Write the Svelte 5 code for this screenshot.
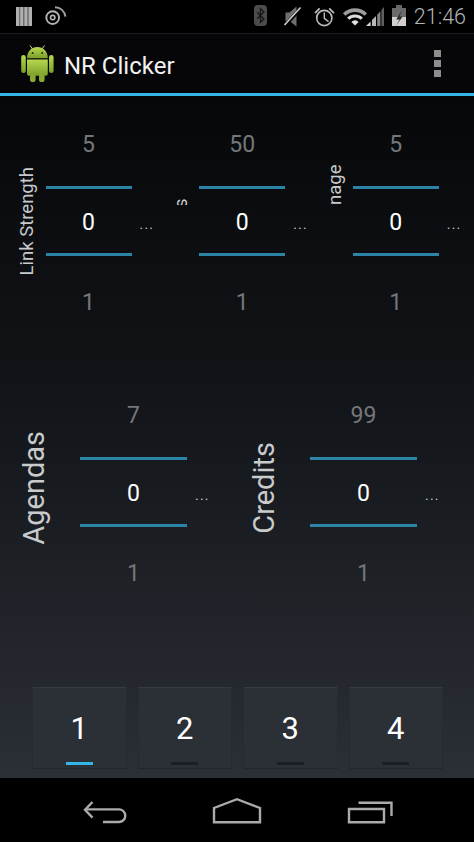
<script>
  const topPickers = [
    { label: 'Link Strength', max: '5', kind: 'full' },
    { label: 's', max: '50', kind: 'clip s' },
    { label: 'nage', max: '5', kind: 'clip' }
  ];
  const lowerPickers = [
    { label: 'Agendas', max: '7' },
    { label: 'Credits', max: '99' }
  ];
  const buttons = ['1', '2', '3', '4'];
</script>

<div class="screen">
  <header class="status">
    <svg class="left-icons" width="52" height="33" viewBox="15 0 52 33" aria-hidden="true">
      <rect x="16" y="7" width="16" height="19" fill="#5c5c5c" />
      <rect x="16" y="7" width="3.2" height="19" fill="#b0b0b0" />
      <rect x="20.2" y="7" width="3" height="19" fill="#b0b0b0" />
      <rect x="24.4" y="7" width="3" height="19" fill="#b0b0b0" />
      <rect x="28.6" y="7" width="3.4" height="19" fill="#b0b0b0" />
      <circle cx="52.7" cy="17.6" r="6.4" fill="none" stroke="#b4b4b4" stroke-width="1.9" />
      <circle cx="52.7" cy="17.6" r="2.2" fill="none" stroke="#b4b4b4" stroke-width="1.6" />
      <path d="M55 7.2A10.5 10.5 0 0 1 65.4 16.6" fill="none" stroke="#a0a0a0" stroke-width="1.9" />
    </svg>
    <div class="status-right">
      <svg width="154" height="33" viewBox="254 0 154 33" aria-hidden="true">
        <rect x="254" y="5" width="13" height="21" rx="4" fill="#4c4c4c" />
        <path d="M257.2 12.2 264 19 260.5 22.3V8.7L264 12 257.2 18.8" fill="none" stroke="#161616" stroke-width="1.3" />
        <path d="M285.5 12.5h4l7-6v20l-7-5.5h-4z" fill="#6f6f6f" />
        <path d="M285 25.5 301 8" stroke="#000" stroke-width="3.4" />
        <path d="M284.5 25 300.5 7.5" stroke="#cfcfcf" stroke-width="1.6" />
        <circle cx="324.3" cy="18" r="7.6" fill="none" stroke="#bdbdbd" stroke-width="1.6" />
        <path d="M324.3 12.5V18.4L328.6 21.6" fill="none" stroke="#bdbdbd" stroke-width="1.4" />
        <path d="M315 13.2 319.6 8.4M329.2 8.4 334 13.2" fill="none" stroke="#bdbdbd" stroke-width="1.7" />
        <path d="M355 25.5 351.4 21.9A5 5 0 0 1 358.6 21.9Z" fill="#e2e2e2" />
        <path d="M348.2 18.7A9.6 9.6 0 0 1 361.8 18.7" fill="none" stroke="#dcdcdc" stroke-width="3" />
        <path d="M344.2 14.6A15.3 15.3 0 0 1 365.8 14.6" fill="none" stroke="#9c9c9c" stroke-width="3.6" />
        <path d="M366 26 370.6 21.4V26Z" fill="#d6d6d6" />
        <path d="M372 26V20L376 16V26Z" fill="#b8b8b8" />
        <path d="M377.2 26V14.8L380.4 11.2V26Z" fill="#848484" />
        <path d="M381.4 26V10L384 7V26Z" fill="#5e5e5e" />
        <rect x="396" y="5" width="6" height="3" fill="#666" />
        <rect x="392" y="8" width="14" height="18" fill="#6a6a6a" />
        <rect x="392" y="17" width="14" height="9" fill="#d0d0d0" />
        <path d="M402 10 396.2 19.5H399.6L396 26 402.6 16.6H399.4Z" fill="#2c2c2c" />
      </svg>
      <span class="time">21:46</span>
    </div>
  </header>

  <div class="actionbar">
    <svg class="droid" width="34" height="39" viewBox="0 0 34 39" aria-hidden="true">
      <defs>
        <linearGradient id="green" x1="0" y1="0" x2="0" y2="1">
          <stop offset="0" stop-color="#b6d94f" />
          <stop offset="1" stop-color="#7b9f2b" />
        </linearGradient>
      </defs>
      <path d="M10 1.5 12.5 5M24.5 1.5 22 5" stroke="#c9d9a0" stroke-width="1" fill="none" />
      <path d="M7 14.2C7 7.5 11.5 3 17.3 3S27.8 7.5 27.8 14.2Z" fill="url(#green)" />
      <circle cx="12.6" cy="9" r="1" fill="#1a2408" />
      <circle cx="22.2" cy="9" r="1" fill="#1a2408" />
      <path d="M7 15.4H27.8V29.2A2.6 2.6 0 0 1 25.2 31.8H9.6A2.6 2.6 0 0 1 7 29.2Z" fill="url(#green)" />
      <rect x="1.2" y="11" width="4.6" height="18" rx="2.3" fill="url(#green)" />
      <rect x="29" y="11" width="4.6" height="18" rx="2.3" fill="url(#green)" />
      <rect x="10" y="30" width="5.6" height="8" rx="2.6" fill="#86a92f" />
      <rect x="19" y="30" width="5.6" height="8" rx="2.6" fill="#86a92f" />
    </svg>
    <h1>NR Clicker</h1>
    <div class="overflow" aria-hidden="true"><i></i><i></i><i></i></div>
  </div>

  <main class="content">
    <section class="row small">
      {#each topPickers as p}
        <div class="cell">
          <div class="label-slot">
            <span class="label {p.kind}">{p.label}</span>
          </div>
          <div class="picker">
            <div class="above">{p.max}</div>
            <div class="value">0</div>
            <div class="below">1</div>
          </div>
          <span class="dots">...</span>
        </div>
      {/each}
    </section>

    <section class="row large">
      {#each lowerPickers as p}
        <div class="cell">
          <div class="label-slot">
            <span class="label big">{p.label}</span>
          </div>
          <div class="picker">
            <div class="above">{p.max}</div>
            <div class="value">0</div>
            <div class="below">1</div>
          </div>
          <span class="dots">...</span>
        </div>
      {/each}
    </section>

    <div class="buttons">
      {#each buttons as b, i}
        <button class="tile" class:on={i === 0}>
          <span class="num">{b}</span>
          <span class="bar"></span>
        </button>
      {/each}
    </div>
  </main>

  <nav class="nav">
    <svg width="474" height="64" viewBox="0 778 474 64" aria-hidden="true">
      <g fill="none" stroke="#ababab" stroke-width="2.4">
        <path d="M92.5 802 85 809.8 92.5 817.6" />
        <path d="M85 809.4H119A6.3 6.3 0 0 1 119 822H103" />
        <path d="M214 822.2V808L237 799.2 260 808V822.2Z" />
        <path d="M349 809H384V822.2H349Z" />
        <path d="M358.5 802.8H391.5V816" />
      </g>
    </svg>
  </nav>
</div>

<style>
  :global(body) {
    margin: 0;
    background: #000;
  }

  .screen {
    width: 474px;
    height: 842px;
    display: flex;
    flex-direction: column;
    overflow: hidden;
    font-family: Roboto, "Liberation Sans", sans-serif;
  }

  .status {
    height: 33px;
    flex: none;
    display: flex;
    align-items: center;
    padding: 0 8px 0 15px;
    background: #000;
    border-bottom: 1px solid #1c1c1c;
  }

  .status svg,
  .actionbar svg,
  .nav svg {
    display: block;
  }

  .status-right {
    margin-left: auto;
    display: flex;
    align-items: center;
    gap: 6px;
  }

  .time {
    color: #b4b4b4;
    font-size: 21.5px;
    font-weight: 300;
    line-height: 33px;
  }

  .actionbar {
    height: 59px;
    flex: none;
    display: flex;
    align-items: center;
    padding: 0 33px 0 20px;
    background: #060608;
    border-bottom: 3px solid #33b5e5;
  }

  .droid {
    margin-right: 10px;
  }

  h1 {
    margin: 4px 0 0;
    font-size: 24px;
    font-weight: 400;
    color: #f2f2f2;
  }

  .overflow {
    margin-left: auto;
    display: flex;
    flex-direction: column;
    gap: 3px;
  }

  .overflow i {
    display: block;
    width: 7px;
    height: 7px;
    background: #8c8c8c;
  }

  .content {
    flex: 1;
    min-height: 0;
    display: flex;
    flex-direction: column;
    background: linear-gradient(180deg, #060709 0%, #14171b 50%, #2b2f36 100%);
  }

  .row {
    display: grid;
  }

  .row.small {
    margin-top: 24px;
    grid-template-columns: repeat(3, 153.67px);
  }

  .row.large {
    margin-top: 68px;
    grid-template-columns: repeat(2, 230px);
  }

  .cell {
    display: grid;
    align-items: center;
    min-width: 0;
  }

  .small .cell {
    grid-template-columns: 45.5px 86px minmax(0, 1fr);
  }

  .large .cell {
    grid-template-columns: 80px 107px minmax(0, 1fr);
  }

  .picker {
    text-align: center;
    font-size: 23px;
  }

  .above,
  .below {
    line-height: 50px;
    color: #74777a;
  }

  .above {
    height: 66px;
  }

  .below {
    height: 67px;
    line-height: 41px;
    display: flex;
    align-items: flex-end;
    justify-content: center;
  }

  .value {
    height: 64px;
    line-height: 68px;
    color: #fff;
    border-top: 3px solid #2b84a6;
    border-bottom: 3px solid #2b84a6;
  }

  .dots {
    align-self: center;
    margin-top: 5px;
    padding-left: 8px;
    font-size: 14px;
    letter-spacing: 1.2px;
    line-height: 14px;
    white-space: nowrap;
    color: #c4c6c8;
  }

  .label-slot {
    height: 100%;
    box-sizing: border-box;
    display: flex;
    align-items: center;
    justify-content: center;
  }

  .small .label-slot {
    padding-left: 9px;
  }

  .large .label-slot {
    padding-right: 12px;
  }

  .label {
    writing-mode: vertical-rl;
    transform: rotate(180deg);
    color: #c8cacc;
    font-size: 18.5px;
    line-height: 22px;
    white-space: nowrap;
  }

  .label.big {
    font-size: 29px;
    line-height: 34px;
    margin-bottom: 10px;
  }

  .label.clip {
    align-self: flex-start;
    margin-top: 35px;
    height: 50px;
    overflow: hidden;
  }

  .label.s {
    text-indent: -3px;
  }

  .buttons {
    margin-top: auto;
    margin-bottom: 9px;
    padding: 0 31px 0 32px;
    display: grid;
    grid-template-columns: repeat(4, minmax(0, 1fr));
    gap: 11px;
  }

  .tile {
    height: 82px;
    padding: 0;
    display: flex;
    flex-direction: column;
    align-items: center;
    background: #2b2f36;
    border: 1px solid #272b31;
    border-top-color: #363a41;
    border-bottom-color: #22252a;
    border-radius: 1px;
    font-family: inherit;
  }

  .num {
    margin-top: 21px;
    font-size: 31px;
    line-height: 40px;
    color: #fff;
  }

  .bar {
    margin-top: auto;
    margin-bottom: 3px;
    width: 27px;
    height: 3px;
    background: #1b1e24;
  }

  .on .bar {
    background: #33b5e5;
  }

  .nav {
    height: 64px;
    flex: none;
    background: #000;
  }
</style>
